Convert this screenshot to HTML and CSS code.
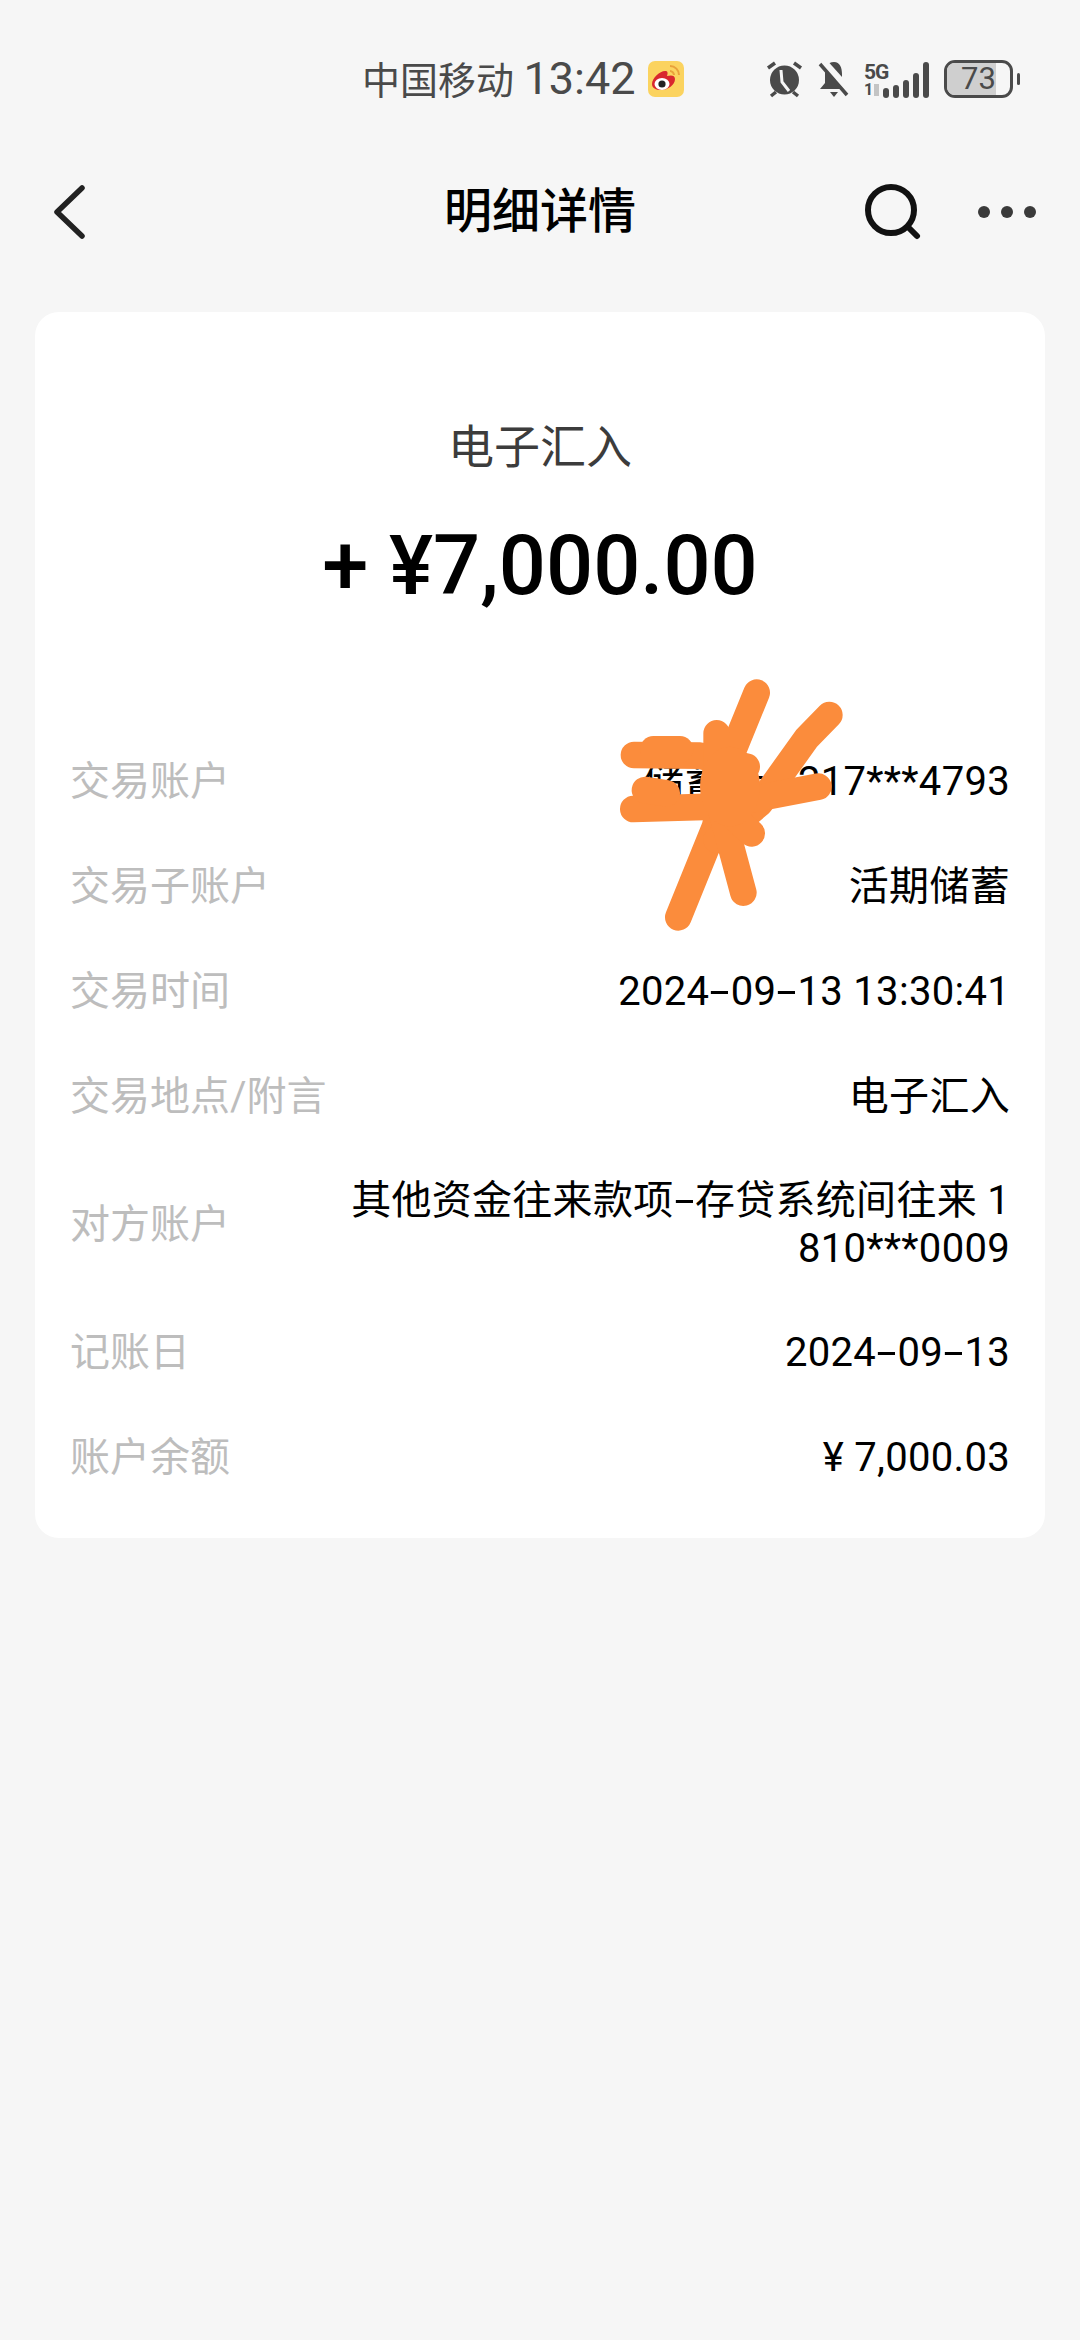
FILE: index.html
```html
<!DOCTYPE html>
<html lang="zh-CN">
<head>
    <meta charset="UTF-8">
    <meta name="viewport" content="width=device-width, initial-scale=1.0">
    <title>明细详情</title>
    <link rel="stylesheet" href="styles.css">
</head>
<body>
    <div class="status_bar">
        <span class="carrier">中国移动 <span class="clock">13:42</span></span>
        <svg class="weibo" width="36" height="36" viewBox="0 0 36 36">
            <rect width="36" height="36" rx="7" fill="#fbd35f"/>
            <path d="M4 23c0-6 8-13 13-13 3 0 3 2 2 5 4-1 8-1 8 3 0 6-7 11-14 11-5 0-9-2-9-6z" fill="#d9272e"/>
            <ellipse cx="14" cy="23" rx="7.5" ry="6" fill="#fff"/>
            <circle cx="14" cy="23" r="3.6" fill="#222"/>
            <path d="M22 5c5 0 9 4 9 9M22 10c2 0 4 2 4 4" fill="none" stroke="#e9a13b" stroke-width="2"/>
        </svg>
        <div class="status_icons">
            <svg width="37" height="38" viewBox="0 0 37 38">
                <circle cx="18.5" cy="20" r="14.5" fill="#4a4a4a"/>
                <path d="M15 10l1 12 7 9" fill="none" stroke="#f6f6f6" stroke-width="3"/>
                <path d="M2 8l7-5M35 8l-7-5M5 36l5-4M32 36l-5-4" stroke="#4a4a4a" stroke-width="3.5" fill="none"/>
            </svg>
            <svg width="31" height="38" viewBox="0 0 31 38">
                <path d="M16 2c-7 0-9 6-9 12v9l-5 6h27l-5-6v-9c0-6-2-12-8-12z" fill="#4a4a4a"/>
                <path d="M12 32h8l-4 5z" fill="#4a4a4a"/>
                <path d="M4 0l27 30" stroke="#f6f6f6" stroke-width="7"/>
                <path d="M2 4l27 31" stroke="#4a4a4a" stroke-width="3.5"/>
            </svg>
            <div class="signal">
                <div class="net">
                    <span class="net_top">5G</span>
                    <span class="net_bottom">1<i class="net_arrow"></i></span>
                </div>
                <div class="bars">
                    <i class="bar_1"></i>
                    <i class="bar_2"></i>
                    <i class="bar_3"></i>
                    <i class="bar_4"></i>
                    <i class="bar_5"></i>
                </div>
            </div>
            <div class="battery">
                <div class="battery_body">
                    <div class="battery_fill" style="width: 78%"></div>
                    <span class="battery_text">73</span>
                </div>
                <div class="battery_nub"></div>
            </div>
        </div>
    </div>

    <div class="nav_bar">
        <svg width="34" height="54" viewBox="0 0 34 54">
            <path d="M30 3L5 27l25 24" fill="none" stroke="#222" stroke-width="5.5" stroke-linecap="round" stroke-linejoin="round"/>
        </svg>
        <h1 class="nav_title">明细详情</h1>
        <svg class="search_icon" width="56" height="56" viewBox="0 0 56 56">
            <circle cx="26" cy="26" r="23" fill="none" stroke="#111" stroke-width="6"/>
            <path d="M43 43l9 9" stroke="#111" stroke-width="6" stroke-linecap="round"/>
        </svg>
        <div class="more_icon"><i></i><i></i><i></i></div>
    </div>

    <section class="detail_card">
        <p class="trade_type">电子汇入</p>
        <p class="trade_amount">+ ¥7,000.00</p>

        <div class="row">
            <span class="row_label">交易账户</span>
            <span class="row_value">储蓄卡 6217***4793</span>
        </div>
        <div class="row">
            <span class="row_label">交易子账户</span>
            <span class="row_value">活期储蓄</span>
        </div>
        <div class="row">
            <span class="row_label">交易时间</span>
            <span class="row_value">2024<span class="dash">-</span>09<span class="dash">-</span>13 13:30:41</span>
        </div>
        <div class="row">
            <span class="row_label">交易地点/附言</span>
            <span class="row_value">电子汇入</span>
        </div>
        <div class="row row_tall">
            <span class="row_label">对方账户</span>
            <span class="row_value">其他资金往来款项<span class="dash">-</span>存贷系统间往来 1<br>810***0009</span>
        </div>
        <div class="row">
            <span class="row_label">记账日</span>
            <span class="row_value">2024<span class="dash">-</span>09<span class="dash">-</span>13</span>
        </div>
        <div class="row">
            <span class="row_label">账户余额</span>
            <span class="row_value">¥ 7,000.03</span>
        </div>
    </section>

    <!-- 手绘涂抹遮挡 -->
    <svg class="scribble" width="260" height="280" viewBox="0 0 780 840">
        <g fill="none" stroke="#fb8c3c" stroke-width="80" stroke-linecap="round" stroke-linejoin="round">
            <path d="M470 98L400 270 345 500 235 772"/>
            <path d="M688 165L620 235 480 430 350 540"/>
            <path d="M102 285L300 287 440 320"/>
            <path d="M160 268L240 268"/>
            <path d="M100 447L340 440 655 380"/>
            <path d="M135 390L200 400"/>
            <path d="M350 220L350 400 430 698"/>
            <path d="M390 330L400 470 455 520"/>
        </g>
        <ellipse cx="390" cy="380" rx="90" ry="120" fill="#fb8c3c"/>
    </svg>
</body>
</html>
```

FILE: styles.css
```css
* {
    box-sizing: border-box;
}

body {
    margin: 0;
    min-height: 2340px;
    position: relative;
    background: #f6f6f6;
    font-family: Roboto, "Noto Sans CJK SC", sans-serif;
    color: #000;
}

/* 状态栏 */
.status_bar {
    height: 158px;
    padding: 60px 60px 0 362px;
    display: flex;
    align-items: flex-start;
}

.carrier {
    font-size: 38px;
    line-height: 38px;
    color: #4a4a4a;
    white-space: nowrap;
}

.clock {
    font-size: 45px;
}

.weibo {
    margin-left: 12px;
    margin-top: 1px;
}

.status_icons {
    margin-left: auto;
    display: flex;
    gap: 15px;
}

.signal {
    display: flex;
    align-items: flex-end;
    height: 38px;
}

.net {
    width: 19px;
    height: 38px;
    padding-top: 2px;
    display: flex;
    flex-direction: column;
    color: #4a4a4a;
    font-weight: 700;
    white-space: nowrap;
}

.net_top {
    font-size: 21px;
    line-height: 20px;
    letter-spacing: -1px;
}

.net_bottom {
    font-size: 16px;
    line-height: 16px;
    display: flex;
    align-items: center;
    gap: 1px;
}

.net_arrow {
    width: 5px;
    height: 12px;
    background: #c4c4c4;
}

.bars {
    display: flex;
    align-items: flex-end;
    gap: 4px;
}

.bars i {
    width: 6px;
    background: #4a4a4a;
    border-radius: 3px;
}

.bar_1 { height: 10px; }
.bar_2 { height: 13px; }
.bar_3 { height: 18px; }
.bar_4 { height: 25px; }
.bar_5 { height: 36px; }

.battery {
    display: flex;
    align-items: center;
    gap: 4px;
}

.battery_body {
    width: 69px;
    height: 38px;
    border: 3px solid #4a4a4a;
    border-radius: 11px;
    position: relative;
    overflow: hidden;
}

.battery_fill {
    height: 100%;
    background: #cfcfcf;
}

.battery_text {
    position: absolute;
    inset: 0;
    text-align: center;
    font-size: 31px;
    line-height: 32px;
    color: #4a4a4a;
}

.battery_nub {
    width: 3px;
    height: 12px;
    background: #4a4a4a;
    border-radius: 2px;
}

/* 标题栏 */
.nav_bar {
    height: 108px;
    padding: 0 44px 0 52px;
    display: flex;
    align-items: center;
    position: relative;
}

.nav_title {
    position: absolute;
    left: 0;
    right: 0;
    margin: 0;
    text-align: center;
    font-size: 48px;
    font-weight: 500;
    line-height: 60px;
}

.search_icon {
    margin-left: auto;
}

.more_icon {
    margin-left: 57px;
    display: flex;
    gap: 11px;
}

.more_icon i {
    width: 12px;
    height: 12px;
    border-radius: 50%;
    background: #3a3a3a;
}

/* 明细卡片 */
.detail_card {
    margin: 46px 35px 0;
    height: 1226px;
    padding: 105px 35px 0;
    background: #fff;
    border-radius: 24px;
}

.trade_type {
    margin: 0;
    text-align: center;
    font-size: 46px;
    line-height: 60px;
    color: #3c3c3c;
}

.trade_amount {
    margin: 39px 0 113px;
    text-align: center;
    font-size: 83px;
    font-weight: 500;
    line-height: 100px;
}

.row {
    min-height: 105px;
    display: flex;
    align-items: center;
    justify-content: space-between;
    font-size: 40px;
    line-height: 48px;
}

.row_tall {
    min-height: 151px;
}

.row_label {
    color: #bdbdbd;
    white-space: nowrap;
}

.row_value {
    text-align: right;
    white-space: nowrap;
    letter-spacing: 0.3px;
}

/* 连字符比默认字体更宽 */
.dash {
    display: inline-block;
    margin: 0 5px;
    transform: scaleX(1.8);
}

.scribble {
    position: absolute;
    left: 600px;
    top: 660px;
}
```
